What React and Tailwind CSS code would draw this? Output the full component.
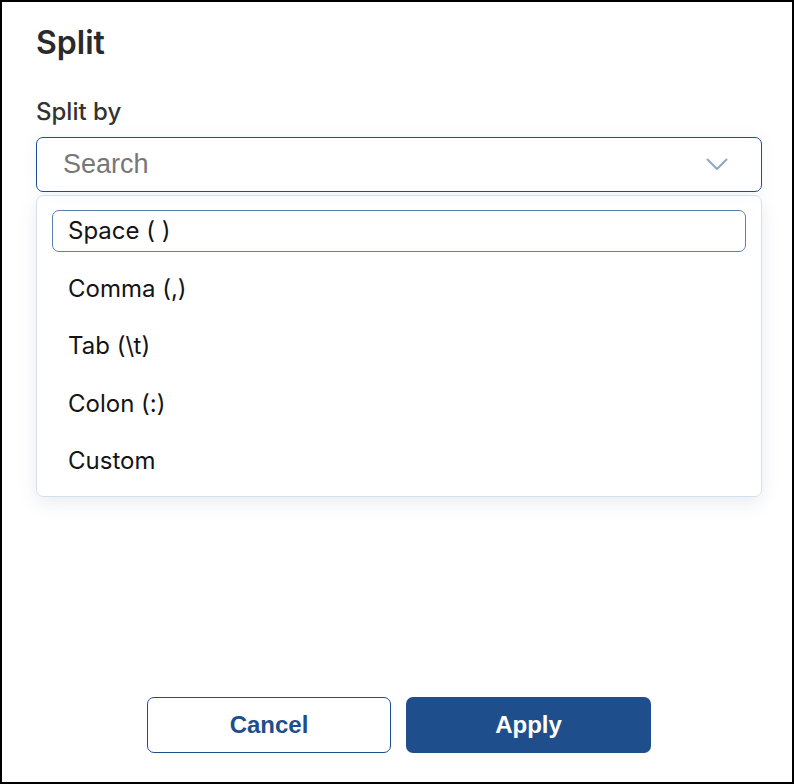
import React from "react";

const items = ["Space ( )", "Comma (,)", "Tab (\\t)", "Colon (:)", "Custom"];

export default function App() {
  return (
    <div className="w-[794px] h-[784px] border-2 border-black bg-white flex flex-col pl-[34px] pr-[30px] pt-[23px] pb-[29px] font-['Inter',sans-serif]">
      <div className="text-[32px] leading-[36px] font-semibold text-[#2a2a2a]">Split</div>
      <div className="mt-[37px] text-[24px] leading-[28px] font-medium text-[#333333]">Split by</div>
      <div className="mt-[11px] h-[55px] rounded-[7px] border border-[#1f4e8c] flex items-center pl-[26px] pr-[33px] shadow-[0_0_16px_rgba(40,70,130,0.06)]">
        <span className="flex-1 font-['Liberation_Sans',Arial,sans-serif] text-[27px] text-[#777777]">Search</span>
        <svg width="22" height="13" viewBox="0 0 22 13" fill="none">
          <path d="M1.5 1.5 L11 11 L20.5 1.5" stroke="#8ea6c9" strokeWidth="2" strokeLinecap="round" strokeLinejoin="round" />
        </svg>
      </div>
      <div className="mt-[3px] rounded-[7px] border border-[#d6e0ec] p-[14px] px-[15px] flex flex-col gap-[15.5px] shadow-[0_6px_18px_rgba(40,70,130,0.10)]">
        {items.map((t, i) => (
          <div
            key={t}
            className={
              "h-[42px] flex items-center pl-[15px] rounded-[7px] border text-[24px] text-[#141414] " +
              (i === 0 ? "border-[#5a7fb5]" : "border-transparent")
            }
          >
            {t}
          </div>
        ))}
      </div>
      <div className="mt-auto flex justify-center gap-[15px] font-['Liberation_Sans',Arial,sans-serif] font-bold text-[24px]">
        <button className="w-[244px] h-[56px] rounded-[7px] border border-[#1f4e8c] bg-white text-[#1f4e8c]">Cancel</button>
        <button className="w-[245px] h-[56px] rounded-[7px] bg-[#1e4f8c] text-white">Apply</button>
      </div>
    </div>
  );
}
